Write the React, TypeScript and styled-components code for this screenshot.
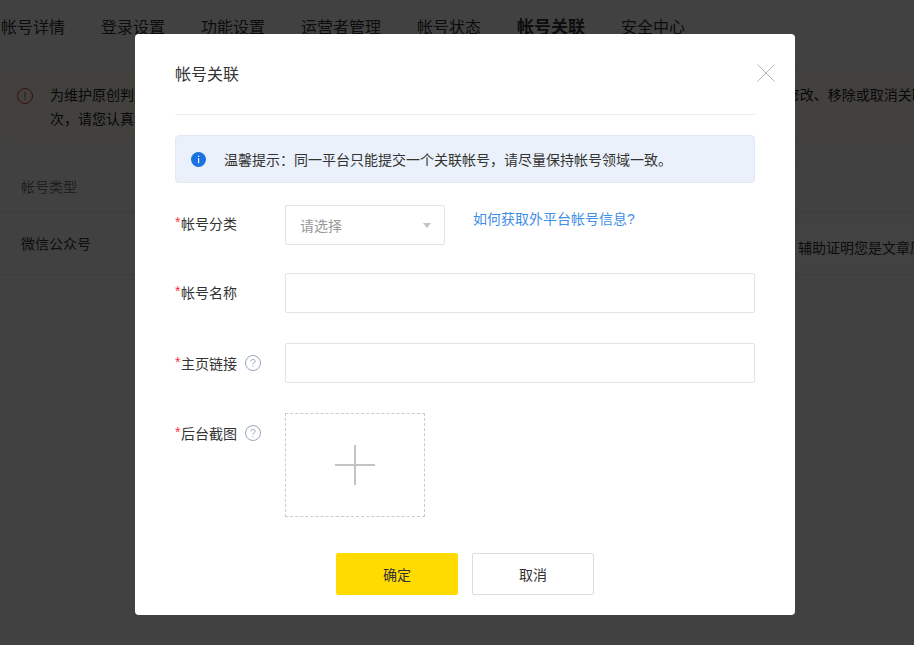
import React from 'react';
import styled, { createGlobalStyle } from 'styled-components';

const GlobalStyle = createGlobalStyle`
    html, body {
        margin: 0;
        padding: 0;
        height: 100%;
        overflow: hidden;
        background: #fbfbfb;
    }
    body, input, button {
        font-family: "Liberation Sans", "Noto Sans CJK SC", sans-serif;
    }
`;

const tabs = ['帐号详情', '登录设置', '功能设置', '运营者管理', '帐号状态', '帐号关联', '安全中心'];

function InfoIcon() {
    return (
        <svg width="15" height="15" viewBox="0 0 15 15">
            <circle cx="7.5" cy="7.5" r="7.5" fill="#1a73e0" />
            <rect x="7" y="3.6" width="1.2" height="1.4" fill="#fff" />
            <rect x="7" y="6.2" width="1.2" height="5" fill="#fff" />
        </svg>
    );
}

function WarnIcon() {
    return (
        <svg width="16" height="16" viewBox="0 0 16 16" fill="none">
            <circle cx="8" cy="8" r="7.5" stroke="#e0313a" />
            <rect x="7.5" y="3.8" width="1" height="5.6" fill="#e0313a" />
            <rect x="7.5" y="10.6" width="1" height="1.3" fill="#e0313a" />
        </svg>
    );
}

function HelpIcon() {
    return (
        <HelpWrap width="16" height="16" viewBox="0 0 16 16" fill="none">
            <circle cx="8" cy="8" r="7.5" stroke="#98a6bc" />
            <path d="M5.9 6.3c0-1.2.9-2 2.1-2s2.1.8 2.1 1.9c0 .8-.4 1.2-1 1.6-.7.5-1.1.8-1.1 1.7" stroke="#98a6bc" />
            <rect x="7.5" y="10.9" width="1" height="1" fill="#98a6bc" />
        </HelpWrap>
    );
}

export default function App() {
    return (
        <>
            <GlobalStyle />
            <Page>
                <Tabs>
                    {tabs.map((tab, i) => (
                        <Tab key={tab} $active={i === 5}>{tab}</Tab>
                    ))}
                </Tabs>
                <Notice>
                    <WarnIcon />
                    <NoticeText>
                        <NoticeLine>为维护原创判定的准确性，请您如实提交真实有效的关联帐号信息，每个平台的关联帐号仅可提交1次且提交后均不支持修改、移除或取消关联帐号，</NoticeLine>
                        <NoticeLine>次，请您认真填写并核对相关信息。</NoticeLine>
                    </NoticeText>
                </Notice>
                <Table>
                    <HeadRow>帐号类型</HeadRow>
                    <BodyRow>
                        微信公众号
                        <Hint>辅助证明您是文章原创作者</Hint>
                    </BodyRow>
                </Table>
            </Page>
            <Overlay>
                <Modal>
                    <Close aria-label="关闭">
                        <svg width="18" height="18" viewBox="0 0 18 18" fill="none">
                            <path d="M.5.5l17 17M17.500.5l-17 17" stroke="#b4b4b4" />
                        </svg>
                    </Close>
                    <Header>帐号关联</Header>
                    <Tip>
                        <InfoIcon />
                        <TipText>温馨提示：同一平台只能提交一个关联帐号，请尽量保持帐号领域一致。</TipText>
                    </Tip>
                    <Form>
                        <Row>
                            <Label $height={36}><Star>*</Star>帐号分类</Label>
                            <Select>
                                请选择
                                <Caret />
                            </Select>
                            <HelpLink href="#">如何获取外平台帐号信息?</HelpLink>
                        </Row>
                        <Row>
                            <Label $height={38}><Star>*</Star>帐号名称</Label>
                            <Input />
                        </Row>
                        <Row>
                            <Label><Star>*</Star>主页链接<HelpIcon /></Label>
                            <Input />
                        </Row>
                        <Row>
                            <Label><Star>*</Star>后台截图<HelpIcon /></Label>
                            <Upload>
                                <svg width="40" height="40" viewBox="0 0 40 40">
                                    <rect x="19" y="0" width="2" height="40" fill="#c4c4c4" />
                                    <rect x="0" y="19" width="40" height="2" fill="#c4c4c4" />
                                </svg>
                            </Upload>
                        </Row>
                    </Form>
                    <Actions>
                        <Button $primary>确定</Button>
                        <Button>取消</Button>
                    </Actions>
                </Modal>
            </Overlay>
        </>
    );
}

const Page = styled.div`
    width: 914px;
    height: 645px;
    overflow: hidden;
    padding-left: 1px;
    box-sizing: border-box;
`;

const Tabs = styled.div`
    display: flex;
    gap: 36px;
    height: 70px;
    padding-top: 17px;
    box-sizing: border-box;
`;

const Tab = styled.div<{ $active?: boolean }>`
    font-size: ${(p) => (p.$active ? '17px' : '16px')};
    font-weight: ${(p) => (p.$active ? 700 : 400)};
    line-height: 22px;
    color: #333;
    white-space: nowrap;
`;

const Notice = styled.div`
    display: flex;
    gap: 17px;
    width: 1100px;
    height: 72px;
    box-sizing: border-box;
    padding: 12px 15px;
    background: #fffaf0;
    border: 1px solid #f6efdf;
    border-radius: 4px;
    svg {
        flex: none;
        margin-top: 5px;
    }
`;

const NoticeText = styled.div`
    font-size: 14px;
    line-height: 24px;
    color: #222;
`;

const NoticeLine = styled.div`
    white-space: nowrap;
`;

const Table = styled.div`
    margin-top: 21px;
    font-size: 14px;
    color: #333;
`;

const HeadRow = styled.div`
    height: 50px;
    line-height: 46px;
    padding-left: 20px;
    color: #777;
    border-top: 1px solid #f4f4f4;
    border-bottom: 1px solid #e8e8e8;
    box-sizing: border-box;
`;

const BodyRow = styled.div`
    display: flex;
    justify-content: space-between;
    height: 62px;
    padding: 10px 0 5px 20px;
    box-sizing: border-box;
    line-height: 42px;
    border-bottom: 1px solid #e8e8e8;
`;

const Hint = styled.div`
    flex: none;
    width: 124px;
    height: 46px;
    padding-left: 8px;
    box-sizing: border-box;
    line-height: 48px;
    white-space: nowrap;
    overflow: hidden;
    background: #fff;
    border-top: 1px solid #f2f2f2;
    border-bottom: 1px solid #f2f2f2;
`;

const Overlay = styled.div`
    position: fixed;
    inset: 0;
    padding: 34px 119px 0 135px;
    box-sizing: border-box;
    background: rgba(0, 0, 0, 0.74);
`;

const Modal = styled.div`
    position: relative;
    width: 660px;
    height: 581px;
    padding: 0 40px 20px;
    box-sizing: border-box;
    background: #fff;
    border-radius: 4px;
`;

const Close = styled.button`
    position: absolute;
    top: 30px;
    right: 20px;
    width: 18px;
    height: 18px;
    padding: 0;
    border: none;
    background: none;
    line-height: 0;
`;

const Header = styled.div`
    height: 81px;
    padding-top: 30px;
    box-sizing: border-box;
    font-size: 16px;
    line-height: 22px;
    color: #333;
    border-bottom: 1px solid #e9eef4;
`;

const Tip = styled.div`
    display: flex;
    align-items: center;
    height: 48px;
    margin-top: 20px;
    padding-left: 15px;
    box-sizing: border-box;
    background: #ebf1fa;
    border: 1px solid #e1e9f3;
    border-radius: 4px;
`;

const TipText = styled.span`
    margin-left: 18px;
    font-size: 14px;
    color: #333;
`;

const Form = styled.div`
    display: flex;
    flex-direction: column;
    margin-top: 22px;
`;

const Row = styled.div`
    display: flex;
    align-items: flex-start;
    & + & {
        margin-top: 30px;
    }
    &:nth-child(2) {
        margin-top: 28px;
    }
`;

const Label = styled.div<{ $height?: number }>`
    display: flex;
    align-items: center;
    flex: none;
    width: 110px;
    height: ${(p) => p.$height ?? 40}px;
    font-size: 14px;
    color: #333;
`;

const Star = styled.span`
    width: 6px;
    margin-top: -3px;
    color: #f5333f;
    font-size: 14px;
`;

const HelpWrap = styled.svg`
    margin-left: 8px;
`;

const Select = styled.div`
    position: relative;
    width: 160px;
    height: 40px;
    padding-left: 14px;
    box-sizing: border-box;
    font-size: 14px;
    line-height: 40px;
    color: #999;
    background: #fff;
    border: 1px solid #e4e4e4;
    border-radius: 2px;
`;

const Caret = styled.span`
    position: absolute;
    top: 17px;
    right: 13px;
    border-top: 5px solid #c4c4c4;
    border-left: 4px solid transparent;
    border-right: 4px solid transparent;
`;

const HelpLink = styled.a`
    margin-left: 28px;
    font-size: 14px;
    line-height: 28px;
    color: #3f8fe6;
    text-decoration: none;
`;

const Input = styled.input`
    flex: 1;
    height: 40px;
    padding: 0 14px;
    box-sizing: border-box;
    border: 1px solid #e4e4e4;
    border-radius: 2px;
    outline: none;
`;

const Upload = styled.div`
    display: flex;
    align-items: center;
    justify-content: center;
    width: 140px;
    height: 104px;
    box-sizing: border-box;
    border: 1px dashed #c8ccd0;
`;

const Actions = styled.div`
    display: flex;
    justify-content: center;
    gap: 14px;
    margin-top: 36px;
`;

const Button = styled.button<{ $primary?: boolean }>`
    width: 122px;
    height: 42px;
    padding: 0;
    font-size: 14px;
    color: #333;
    background: ${(p) => (p.$primary ? '#ffdb00' : '#fff')};
    border: 1px solid ${(p) => (p.$primary ? '#ffdb00' : '#d9dde1')};
    border-radius: 2px;
`;
